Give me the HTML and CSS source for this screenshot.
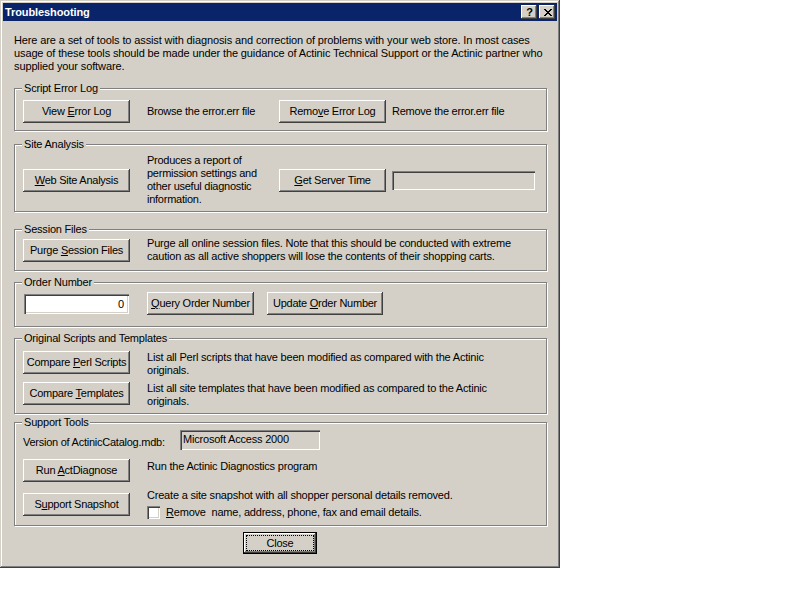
FILE: index.html
```html
<!DOCTYPE html>
<html>
<head>
<meta charset="utf-8">
<title>Troubleshooting</title>
<link rel="stylesheet" href="styles.css">
</head>
<body>
<div class="window">
  <div class="titlebar">
    <span class="title">Troubleshooting</span>
    <div class="tb-buttons">
      <span class="tb-btn tb-help">?</span>
      <span class="tb-btn tb-close">
        <svg width="8" height="7" viewBox="0 0 8 7" shape-rendering="crispEdges"><path fill="#000" d="M0 0h2v1H0zM6 0h2v1H6zM1 1h2v1H1zM5 1h2v1H5zM2 2h4v1H2zM3 3h2v1H3zM2 4h4v1H2zM1 5h2v1H1zM5 5h2v1H5zM0 6h2v1H0zM6 6h2v1H6z"/></svg>
      </span>
    </div>
  </div>
  <div class="content">
    <p class="intro">Here are a set of tools to assist with diagnosis and correction of problems with your web store. In most cases<br>usage of these tools should be made under the guidance of Actinic Technical Support or the Actinic partner who<br>supplied your software.</p>

    <div class="group g-error">
      <div class="legend">Script Error Log</div>
      <div class="row row-error">
        <button class="btn">View <u>E</u>rror Log</button>
        <span class="desc desc-col">Browse the error.err file</span>
        <button class="btn">Remo<u>v</u>e Error Log</button>
        <span class="desc desc-after">Remove the error.err file</span>
      </div>
    </div>

    <div class="group g-site">
      <div class="legend">Site Analysis</div>
      <div class="row row-site">
        <button class="btn"><u>W</u>eb Site Analysis</button>
        <span class="desc desc-col">Produces a report of<br>permission settings and<br>other useful diagnostic<br>information.</span>
        <button class="btn"><u>G</u>et Server Time</button>
        <span class="field field-time"></span>
      </div>
    </div>

    <div class="group g-session">
      <div class="legend">Session Files</div>
      <div class="row row-session">
        <button class="btn">Purge <u>S</u>ession Files</button>
        <span class="desc desc-wide">Purge all online session files. Note that this should be conducted with extreme<br>caution as all active shoppers will lose the contents of their shopping carts.</span>
      </div>
    </div>

    <div class="group g-order">
      <div class="legend">Order Number</div>
      <div class="row row-order">
        <span class="field field-order">0</span>
        <button class="btn btn-query"><u>Q</u>uery Order Number</button>
        <button class="btn btn-update">Update <u>O</u>rder Number</button>
      </div>
    </div>

    <div class="group g-orig">
      <div class="legend">Original Scripts and Templates</div>
      <div class="row row-top row-orig">
        <button class="btn">Compare <u>P</u>erl Scripts</button>
        <span class="desc desc-top">List all Perl scripts that have been modified as compared with the Actinic<br>originals.</span>
      </div>
      <div class="row row-top row-orig2">
        <button class="btn">Compare <u>T</u>emplates</button>
        <span class="desc desc-top">List all site templates that have been modified as compared to the Actinic<br>originals.</span>
      </div>
    </div>

    <div class="group g-support">
      <div class="legend">Support Tools</div>
      <div class="row row-version">
        <span class="version-label">Version of ActinicCatalog.mdb:</span>
        <span class="field field-version">Microsoft Access 2000</span>
      </div>
      <div class="row row-top row-run">
        <button class="btn">Run <u>A</u>ctDiagnose</button>
        <span class="desc desc-run">Run the Actinic Diagnostics program</span>
      </div>
      <div class="row row-snap">
        <button class="btn">S<u>u</u>pport Snapshot</button>
        <div class="snap-col">
          <span class="snap-text">Create a site snapshot with all shopper personal details removed.</span>
          <label class="check-row"><span class="checkbox"></span><span class="check-label"><u>R</u>emove&nbsp; name, address, phone, fax and email details.</span></label>
        </div>
      </div>
    </div>

    <div class="footer">
      <button class="btn btn-default"><span class="focus">Close</span></button>
    </div>
  </div>
</div>
</body>
</html>
```

FILE: styles.css
```css
html, body {
  margin: 0;
  padding: 0;
  background: #ffffff;
}

body {
  font-family: "Liberation Sans", Arial, sans-serif;
  font-size: 11px;
  line-height: 13px;
  color: #000;
}

.window {
  width: 560px;
  height: 568px;
  box-sizing: border-box;
  padding: 3px;
  background: #d4d0c8;
  box-shadow: inset -1px -1px #404040, inset 1px 1px #d4d0c8, inset -2px -2px #808080, inset 2px 2px #ffffff;
}

.titlebar {
  height: 18px;
  background: #0a246a;
  display: flex;
  align-items: center;
  justify-content: space-between;
  padding: 0 2px 0 2px;
}

.title {
  color: #fff;
  font-weight: bold;
  font-size: 11px;
  letter-spacing: -0.1px;
}

.tb-buttons {
  display: flex;
  gap: 2px;
}

.tb-btn {
  width: 16px;
  height: 14px;
  box-sizing: border-box;
  background: #d4d0c8;
  box-shadow: inset -1px -1px #404040, inset 1px 1px #ffffff, inset -2px -2px #808080;
  display: flex;
  align-items: center;
  justify-content: center;
}

.tb-help {
  font-weight: bold;
  font-size: 11px;
  line-height: 14px;
  padding-left: 1px;
}

.tb-close svg {
  display: block;
  margin-left: 1px;
}

.content {
  padding: 13px 10px 0 11px;
}

.intro {
  margin: 0;
  white-space: nowrap;
  letter-spacing: -0.12px;
}

.group {
  border: 1px solid #808080;
  box-shadow: inset 1px 1px #ffffff, 1px 1px #ffffff;
  padding: 0 0 7px 8px;
}

.legend {
  margin: -7px 0 0 -1px;
  padding: 0 2px;
  background: #d4d0c8;
  width: max-content;
  line-height: 13px;
  letter-spacing: -0.2px;
}

.row {
  display: flex;
  align-items: center;
}

.row-top {
  align-items: flex-start;
}

.btn {
  font: inherit;
  letter-spacing: -0.25px;
  color: #000;
  background: #d4d0c8;
  border: 0;
  margin: 0;
  padding: 0;
  width: 107px;
  height: 23px;
  flex: none;
  box-shadow: inset -1px -1px #404040, inset 1px 1px #ffffff, inset -2px -2px #808080;
}

.desc {
  white-space: nowrap;
  letter-spacing: -0.2px;
}

.desc-col {
  width: 132px;
  margin-left: 17px;
  flex: none;
  letter-spacing: -0.25px;
}

.desc-after {
  margin-left: 6px;
  letter-spacing: -0.25px;
}

.desc-wide,
.desc-top,
.desc-run {
  margin-left: 17px;
}

.field {
  display: block;
  box-sizing: border-box;
  height: 20px;
  background: #d4d0c8;
  box-shadow: inset 1px 1px #808080, inset 2px 2px #404040, inset -1px -1px #ffffff, inset -2px -2px #d4d0c8;
  letter-spacing: -0.2px;
  flex: none;
}

/* Script Error Log */
.g-error {
  margin-top: 15px;
}
.row-error {
  margin-top: 5px;
}

/* Site Analysis */
.g-site {
  margin-top: 13px;
  padding-bottom: 5px;
}
.row-site {
  margin-top: 3px;
}
.field-time {
  width: 143px;
  height: 19px;
  margin-left: 6px;
}

/* Session Files */
.g-session {
  margin-top: 17px;
}
.row-session {
  margin-top: 1px;
}

/* Order Number */
.g-order {
  margin-top: 11px;
  padding-bottom: 11px;
}
.row-order {
  margin-top: 3px;
}
.field-order {
  width: 105px;
  margin-left: 1px;
  background: #ffffff;
  text-align: right;
  padding: 4px 5px 0 0;
}
.btn-query {
  margin-left: 18px;
}
.btn-update {
  margin-left: 13px;
  width: 116px;
}

/* Original Scripts and Templates */
.g-orig {
  margin-top: 11px;
  padding-bottom: 5px;
}
.row-orig {
  margin-top: 6px;
}
.row-orig2 {
  margin-top: 5px;
}
.desc-top {
  margin-top: 0;
}

/* Support Tools */
.g-support {
  margin-top: 8px;
  padding-bottom: 6px;
}
.row-version {
  margin-top: 1px;
}
.version-label {
  width: 157px;
  flex: none;
  padding-top: 4px;
  white-space: nowrap;
  letter-spacing: -0.25px;
}
.field-version {
  width: 140px;
  padding: 3px 0 0 3px;
  white-space: nowrap;
}
.row-run {
  margin-top: 9px;
}
.desc-run {
  margin-top: 1px;
}
.row-snap {
  margin-top: 7px;
}
.snap-col {
  margin-left: 17px;
  display: flex;
  flex-direction: column;
  letter-spacing: -0.2px;
  white-space: nowrap;
}
.check-row {
  display: flex;
  align-items: center;
  margin-top: 4px;
}
.checkbox {
  width: 13px;
  height: 13px;
  background: #ffffff;
  box-shadow: inset 1px 1px #808080, inset 2px 2px #404040, inset -1px -1px #ffffff, inset -2px -2px #d4d0c8;
  flex: none;
}
.check-label {
  margin-left: 6px;
}

/* Footer */
.footer {
  display: flex;
  justify-content: center;
  margin-top: 6px;
  padding-right: 1px;
}
.btn-default {
  width: 74px;
  height: 22px;
  padding: 3px;
  box-sizing: border-box;
  display: flex;
  box-shadow: inset 0 0 0 1px #000000, inset -2px -2px #404040, inset 2px 2px #ffffff, inset -3px -3px #808080;
}
.focus {
  flex: 1;
  border: 1px dotted #000;
  display: flex;
  align-items: center;
  justify-content: center;
}
```
